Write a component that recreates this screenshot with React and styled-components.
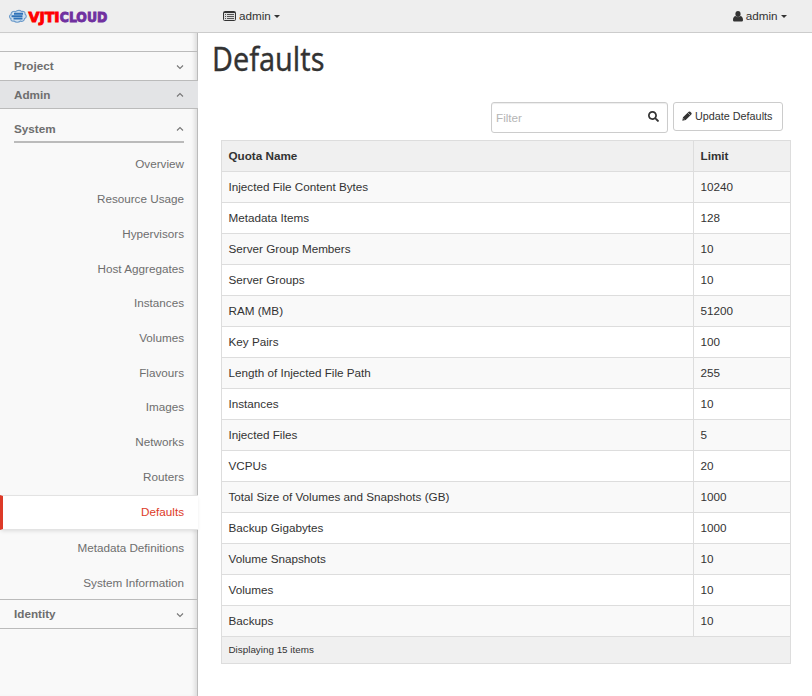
import React from 'react';
import styled, { createGlobalStyle } from 'styled-components';
import { FaSearch } from 'react-icons/fa';

const GlobalStyle = createGlobalStyle`
  *, *::before, *::after { box-sizing: border-box; }
  body {
    margin: 0;
    background: #fff;
    color: #333;
    font: 11.7px/20px 'Liberation Sans', Arial, sans-serif;
    overflow: hidden;
  }
`;

const Page = styled.div`
  height: 696px;
  display: flex;
  flex-direction: column;
`;

const TopBar = styled.header`
  height: 33px;
  flex: none;
  display: flex;
  align-items: center;
  background: #eee;
  border-bottom: 1px solid #ccc;
`;

const LogoArea = styled.div`
  width: 223px;
  height: 32px;
  padding-left: 8px;
  svg { display: block; overflow: visible; }
`;

const MenuToggle = styled.div`
  display: flex;
  align-items: center;
  height: 32px;
  margin-left: ${({ $end }) => ($end ? 'auto' : '0')};
  margin-right: ${({ $end }) => ($end ? '25px' : '0')};
  svg { margin-right: ${({ $end }) => ($end ? '2.5px' : '3px')}; }
`;

const Caret = styled.i`
  margin-left: 3.5px;
  border: 3px solid transparent;
  border-top-color: #333;
  border-bottom: 0;
`;

const Body = styled.div`
  flex: 1;
  display: flex;
`;

const Sidebar = styled.nav`
  width: 198px;
  flex: none;
  padding-top: 18px;
  background: #f9f9f9;
  color: #6e6e6e;
  border-right: 1px solid #bbb;
  box-shadow: inset -5px 0 5px -3px rgba(0, 0, 0, 0.13);
`;

const PanelHeader = styled.div`
  display: flex;
  align-items: center;
  justify-content: space-between;
  height: ${({ $active }) => ($active ? '28px' : '30px')};
  padding: 0 13px 0 14px;
  font-weight: bold;
  border-top: ${({ $active }) => ($active ? '0' : '1px')} solid #bbb;
  border-bottom: 1px solid #bbb;
  margin-right: ${({ $active }) => ($active ? '-1px' : '0')};
  padding-right: ${({ $active }) => ($active ? '14px' : '13px')};
  background: ${({ $active }) => ($active ? '#e3e4e6' : 'transparent')};
`;

const LastPanelHeader = styled(PanelHeader)`
  margin-top: -1px;
`;

const GroupHeader = styled.div`
  display: flex;
  align-items: center;
  justify-content: space-between;
  height: 34px;
  margin: 0 13px 4.1px 14px;
  padding-top: 7px;
  font-weight: bold;
  border-bottom: 2px solid #bbb;
`;

const NavItem = styled.div`
  display: flex;
  align-items: center;
  justify-content: flex-end;
  height: 34.72px;
  padding-right: 13px;
`;

const CurrentItem = styled(NavItem)`
  height: 35px;
  margin: 0.55px -1px 1.15px 0;
  padding-right: 14px;
  color: #dd3a28;
  background: #fff;
  border-left: 3px solid #dd3a28;
  border-top: 1px solid #e3e3e3;
  border-bottom: 1px solid #e3e3e3;
  box-shadow: 0 2px 4px -1px rgba(0, 0, 0, 0.12);
`;

const Main = styled.main`
  flex: 1;
  padding: 6px 21px 0 14px;
`;

const Title = styled.h1`
  margin: 0;
  height: 40px;
  font: 400 32px/40px 'Noto Sans', sans-serif;
  -webkit-text-stroke: 0.3px #333;
  width: max-content;
  transform: scaleX(0.897);
  transform-origin: left;
`;

const Content = styled.div`
  margin: 23px 0 0 9px;
`;

const Actions = styled.div`
  display: flex;
  justify-content: flex-end;
  align-items: flex-start;
  gap: 5px;
  height: 38px;
  padding-right: 8px;
`;

const FilterBox = styled.label`
  display: flex;
  align-items: center;
  width: 177px;
  height: 31px;
  padding: 0 8px 0 4px;
  border: 1px solid #ccc;
  border-radius: 3px;
  box-shadow: inset 0 1px 1px rgba(0, 0, 0, 0.075);
  svg { margin-bottom: 3px; }
`;

const FilterInput = styled.input`
  flex: 1;
  min-width: 0;
  padding: 0;
  border: 0;
  outline: 0;
  background: transparent;
  font: inherit;
  &::placeholder { color: #b5b5b5; opacity: 1; }
`;

const ActionButton = styled.button`
  display: flex;
  align-items: center;
  gap: 3px;
  width: 110px;
  height: 29px;
  padding: 0 0 1px 8px;
  white-space: nowrap;
  color: #333;
  font: 10.8px/16px 'Liberation Sans', Arial, sans-serif;
  background: #fff;
  border: 1px solid #ccc;
  border-radius: 3px;
`;

const Table = styled.table`
  width: 570px;
  table-layout: fixed;
  border-collapse: collapse;
  border: 1px solid #ddd;
`;

const Cell = styled.td`
  height: 31px;
  padding: 0 6.5px;
  text-align: left;
  border: 1px solid #ddd;
`;

const HeadCell = styled(Cell)`
  width: ${({ $width }) => $width};
  font-weight: bold;
  background: #f0f0f0;
`;

const Row = styled.tr`
  background: ${({ $striped }) => ($striped ? '#f9f9f9' : '#fff')};
`;

const FootCell = styled(Cell)`
  height: 27px;
  font-size: 9.85px;
  background: #f0f0f0;
`;

const links = ['Overview', 'Resource Usage', 'Hypervisors', 'Host Aggregates', 'Instances', 'Volumes', 'Flavours', 'Images', 'Networks', 'Routers', 'Defaults', 'Metadata Definitions', 'System Information'];

const quotas = [
  ['Injected File Content Bytes', 10240],
  ['Metadata Items', 128],
  ['Server Group Members', 10],
  ['Server Groups', 10],
  ['RAM (MB)', 51200],
  ['Key Pairs', 100],
  ['Length of Injected File Path', 255],
  ['Instances', 10],
  ['Injected Files', 5],
  ['VCPUs', 20],
  ['Total Size of Volumes and Snapshots (GB)', 1000],
  ['Backup Gigabytes', 1000],
  ['Volume Snapshots', 10],
  ['Volumes', 10],
  ['Backups', 10],
];

function Logo() {
  return (
    <svg width="102" height="32" viewBox="0 0 102 32">
      <path d="M6 21C3.500 21.500 2.500 20 3 18.700 1 18 1 15 3 14.500 3 12 5.500 10.500 7.500 11.700 9.500 9.800 12.500 10 13.500 11.500 16 10.800 17.500 12.500 17 14 19 15.500 18.500 18 16.500 18.500 16.500 21 14 22 12.500 21 10.500 23 7.500 22.500 6 21Z" fill="#cfe0ef" stroke="#6b9aca" strokeWidth="1.100" />
      <path d="M6 13.800h9M3.500 16.200h11M5.500 18.600h9" stroke="#2f72b8" strokeWidth="1.900" />
      <g fontFamily="'DejaVu Sans', sans-serif" fontWeight="bold" fontSize="14.500" strokeWidth="1">
        <text x="20.500" y="21.500" textLength="31" lengthAdjust="spacingAndGlyphs" fill="#f00" stroke="#f00">VJTI</text>
        <text x="51.800" y="21.500" textLength="47.500" lengthAdjust="spacingAndGlyphs" fill="#7030a0" stroke="#7030a0">CLOUD</text>
      </g>
    </svg>
  );
}

function ListIcon() {
  return (
    <svg width="13" height="10" viewBox="0 0 13 10">
      <rect x=".5" y=".5" width="12" height="9" rx="1" fill="#ddd" stroke="#333" />
      <path d="M1 1.500h11" stroke="#333" />
      <path d="M2 3.500h1M4 3.500h7M2 5.500h1M4 5.500h7M2 7.500h1M4 7.500h7" stroke="#555" />
    </svg>
  );
}

function UserIcon() {
  return (
    <svg width="10" height="11" viewBox="0 0 10 11" fill="#333">
      <ellipse cx="5" cy="3" rx="2.600" ry="3" />
      <path d="M2.400 5C.7 5.500 0 7 0 9c0 1 .7 1.500 1.600 1.500h6.800C9.300 10.500 10 10 10 9c0-2-.7-3.500-2.400-4-1.400 1.500-3.800 1.500-5.200 0Z" />
    </svg>
  );
}

function PencilIcon() {
  return (
    <svg width="10" height="10" viewBox="0 0 10 10" fill="#333">
      <path d="M.3 9.700 1 6.300 6.700.8q.8-.8 1.600 0l1 1q.8.8 0 1.600L3.700 9Z" />
      <path d="m6 2 2 2M1.300 7.500l1.200 1.200" stroke="#fff" strokeWidth=".5" />
    </svg>
  );
}

function Chevron({ up }) {
  return (
    <svg width="8" height="8" viewBox="0 0 8 8" fill="none" stroke="#777" strokeWidth="1.100">
      <path d={up ? 'M1 5.500 4 2.500 7 5.500' : 'M1 3.500 4 6.500 7 3.500'} />
    </svg>
  );
}

export default function App() {
  return (
    <Page>
      <GlobalStyle />
      <TopBar>
        <LogoArea><Logo /></LogoArea>
        <MenuToggle><ListIcon />admin<Caret /></MenuToggle>
        <MenuToggle $end><UserIcon />admin<Caret /></MenuToggle>
      </TopBar>
      <Body>
        <Sidebar>
          <PanelHeader>Project<Chevron /></PanelHeader>
          <PanelHeader $active>Admin<Chevron up /></PanelHeader>
          <GroupHeader>System<Chevron up /></GroupHeader>
          {links.map((link) => {
            const Item = link === 'Defaults' ? CurrentItem : NavItem;
            return <Item key={link}>{link}</Item>;
          })}
          <LastPanelHeader>Identity<Chevron /></LastPanelHeader>
        </Sidebar>
        <Main>
          <Title>Defaults</Title>
          <Content>
            <Actions>
              <FilterBox><FilterInput placeholder="Filter" /><FaSearch size={11} /></FilterBox>
              <ActionButton><PencilIcon />Update Defaults</ActionButton>
            </Actions>
            <Table>
              <thead>
                <tr><HeadCell as="th" $width="472px">Quota Name</HeadCell><HeadCell as="th">Limit</HeadCell></tr>
              </thead>
              <tbody>
                {quotas.map(([name, limit], index) => (
                  <Row key={name} $striped={index % 2 === 0}><Cell>{name}</Cell><Cell>{limit}</Cell></Row>
                ))}
              </tbody>
              <tfoot>
                <tr><FootCell colSpan={2}>Displaying 15 items</FootCell></tr>
              </tfoot>
            </Table>
          </Content>
        </Main>
      </Body>
    </Page>
  );
}
